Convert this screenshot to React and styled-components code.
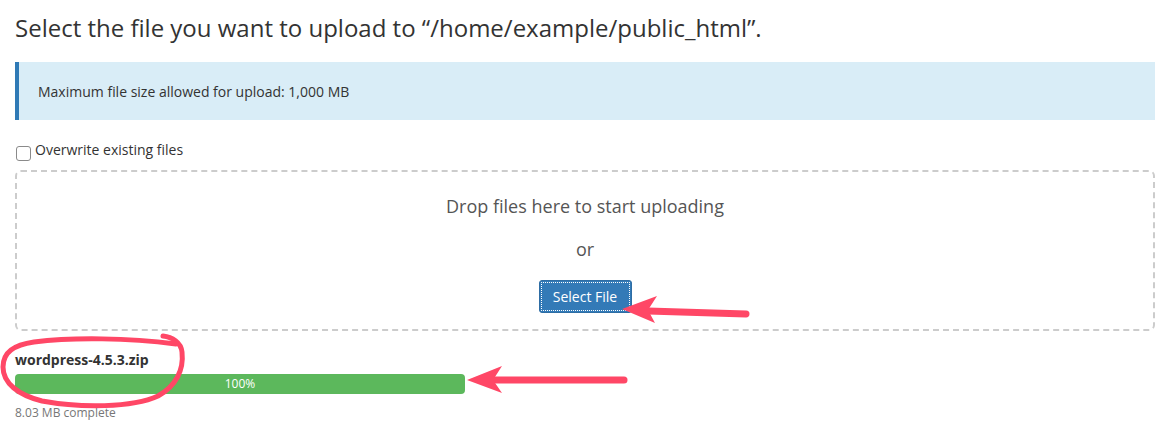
import React from 'react'
import styled, { createGlobalStyle } from 'styled-components'

const GlobalStyle = createGlobalStyle`
  html, body {
    margin: 0;
    padding: 0;
    background: #fff;
  }
  body {
    font-family: "Open Sans", "Liberation Sans", sans-serif;
    color: #333;
  }
`

const Page = styled.div`
  position: relative;
  width: 1174px;
  height: 439px;
  padding: 0 19px 0 15px;
  box-sizing: border-box;
  overflow: hidden;
`

const Title = styled.h1`
  margin: 0;
  padding-top: 12px;
  height: 62px;
  box-sizing: border-box;
  font-size: 24px;
  font-weight: 400;
  line-height: 32px;
  color: #333;
`

const Alert = styled.div`
  height: 58px;
  display: flex;
  align-items: center;
  padding-left: 19px;
  background: #d9edf7;
  border-left: 4px solid #2f7ab6;
  font-size: 14px;
  color: #333;
`

const CheckRow = styled.label`
  display: flex;
  align-items: flex-start;
  margin-top: 20px;
  height: 30px;
  font-size: 14px;
  line-height: 19px;
  color: #333;
`

const Box = styled.span`
  width: 13px;
  height: 13px;
  margin: 6px 4px 0 1px;
  border: 1px solid #8a8a8a;
  border-radius: 3px;
  background: #fff;
  flex: none;
`

const DropZone = styled.div`
  height: 161px;
  border: 2px dashed #ccc;
  border-radius: 6px;
  box-sizing: border-box;
  display: flex;
  flex-direction: column;
  align-items: center;
  padding-top: 22px;
`

const DropText = styled.div`
  font-size: 18px;
  line-height: 24px;
  color: #555;
  margin-bottom: ${p => p.gap}px;
`

const SelectButton = styled.button`
  width: 93px;
  height: 33px;
  padding: 0;
  border: 1px solid #2e6da4;
  border-radius: 3px;
  background: #337ab7;
  color: #fff;
  font-family: "Open Sans", "Liberation Sans", sans-serif;
  font-size: 14px;
  outline: 1px dotted #fff;
  outline-offset: -3px;
`

const FileBlock = styled.div`
  margin-top: 19px;
  width: 450px;
`

const FileName = styled.div`
  font-size: 14px;
  font-weight: 700;
  line-height: 20px;
  color: #333;
`

const Bar = styled.div`
  height: 20px;
  margin-top: 4px;
  border-radius: 4px;
  background: #f5f5f5;
  overflow: hidden;
`

const BarFill = styled.div`
  height: 100%;
  background: #5cb85c;
  color: #fff;
  font-size: 12px;
  line-height: 20px;
  text-align: center;
`

const Status = styled.div`
  margin-top: 11px;
  font-size: 12px;
  line-height: 16px;
  color: #777;
`

const Marks = styled.svg`
  position: absolute;
  left: 0;
  top: 0;
  pointer-events: none;
`

const red = '#ff4766'

const Annotations = () => (
  <Marks width="1174" height="439" viewBox="0 0 1174 439">
    <path
      d="M163 336 C172 337 181 342 182 352 C184 370 176 386 158 396 C132 408 80 408 42 401 C18 395 3 383 3 367 C3 352 14 345 34 342 C74 337 128 338 176 344"
      fill="none"
      stroke={red}
      strokeWidth="5"
      strokeLinecap="round"
    />
    <path d="M648 311 L746 314" stroke={red} strokeWidth="7" strokeLinecap="round" />
    <path d="M622 309 L657 296 L648 310 L655 323 Z" fill={red} />
    <path d="M495 380 L624 380" stroke={red} strokeWidth="7" strokeLinecap="round" />
    <path d="M467 380 L502 366 L493 380 L502 393 Z" fill={red} />
  </Marks>
)

const App = () => (
  <>
    <GlobalStyle />
    <Page>
      <Title>Select the file you want to upload to “/home/example/public_html”.</Title>
      <Alert>Maximum file size allowed for upload: 1,000 MB</Alert>
      <CheckRow>
        <Box />
        Overwrite existing files
      </CheckRow>
      <DropZone>
        <DropText gap={19}>Drop files here to start uploading</DropText>
        <DropText gap={19}>or</DropText>
        <SelectButton>Select File</SelectButton>
      </DropZone>
      <FileBlock>
        <FileName>wordpress-4.5.3.zip</FileName>
        <Bar>
          <BarFill style={{ width: '100%' }}>100%</BarFill>
        </Bar>
        <Status>8.03 MB complete</Status>
      </FileBlock>
      <Annotations />
    </Page>
  </>
)

export default App
